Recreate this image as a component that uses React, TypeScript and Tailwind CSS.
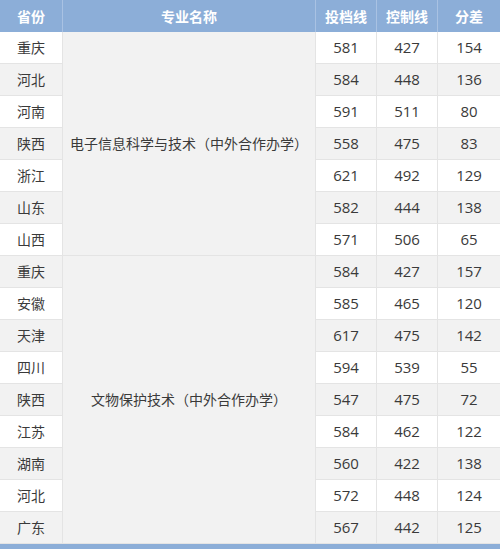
import React from "react";

const group1 = [
  ["重庆", "581", "427", "154"],
  ["河北", "584", "448", "136"],
  ["河南", "591", "511", "80"],
  ["陕西", "558", "475", "83"],
  ["浙江", "621", "492", "129"],
  ["山东", "582", "444", "138"],
  ["山西", "571", "506", "65"],
];
const group2 = [
  ["重庆", "584", "427", "157"],
  ["安徽", "585", "465", "120"],
  ["天津", "617", "475", "142"],
  ["四川", "594", "539", "55"],
  ["陕西", "547", "475", "72"],
  ["江苏", "584", "462", "122"],
  ["湖南", "560", "422", "138"],
  ["河北", "572", "448", "124"],
  ["广东", "567", "442", "125"],
];

const font = { fontFamily: '"Open Sans", "Noto Sans CJK SC", sans-serif' };

function Row({ r, i, name, span }: { r: string[]; i: number; name?: string; span?: number }) {
  const bg = i % 2 === 0 ? "bg-white" : "bg-[#f2f2f2]";
  const cell = `${bg} flex items-center justify-center border-b border-r border-[#e4e4e4] h-[32px]`;
  return (
    <>
      <div className={cell}>{r[0]}</div>
      {name && (
        <div
          className={
            span === 7
              ? "row-span-7 bg-[#f2f2f2] flex items-center justify-center border-b border-r border-[#e4e4e4]"
              : "row-span-9 bg-[#f2f2f2] flex items-center justify-center border-b border-r border-[#e4e4e4]"
          }
        >
          {name}
        </div>
      )}
      <div className={`${cell} text-[15px]`}>{r[1]}</div>
      <div className={`${cell} text-[15px]`}>{r[2]}</div>
      <div className={`${bg} flex items-center justify-center border-b border-[#e4e4e4] h-[32px] text-[15px]`}>{r[3]}</div>
    </>
  );
}

export default function App() {
  return (
    <div className="w-[500px] h-[549px] bg-white overflow-hidden text-[14px] text-[#3a3a3a]" style={font}>
      <div className="grid grid-cols-[63px_253px_61px_61px_62px] auto-rows-[32px]">
        {["省份", "专业名称", "投档线", "控制线", "分差"].map((h, k) => (
          <div
            key={h}
            className={
              k < 4
                ? "bg-[#8caed8] text-white font-bold flex items-center justify-center border-r border-[#a9c2e3]"
                : "bg-[#8caed8] text-white font-bold flex items-center justify-center"
            }
          >
            {h}
          </div>
        ))}
        {group1.map((r, i) => (
          <Row key={"a" + i} r={r} i={i} name={i === 0 ? "电子信息科学与技术（中外合作办学）" : undefined} span={7} />
        ))}
        {group2.map((r, i) => (
          <Row key={"b" + i} r={r} i={i + 1} name={i === 0 ? "文物保护技术（中外合作办学）" : undefined} span={9} />
        ))}
      </div>
      <div className="h-[5px] bg-[#8caed8]" />
    </div>
  );
}
